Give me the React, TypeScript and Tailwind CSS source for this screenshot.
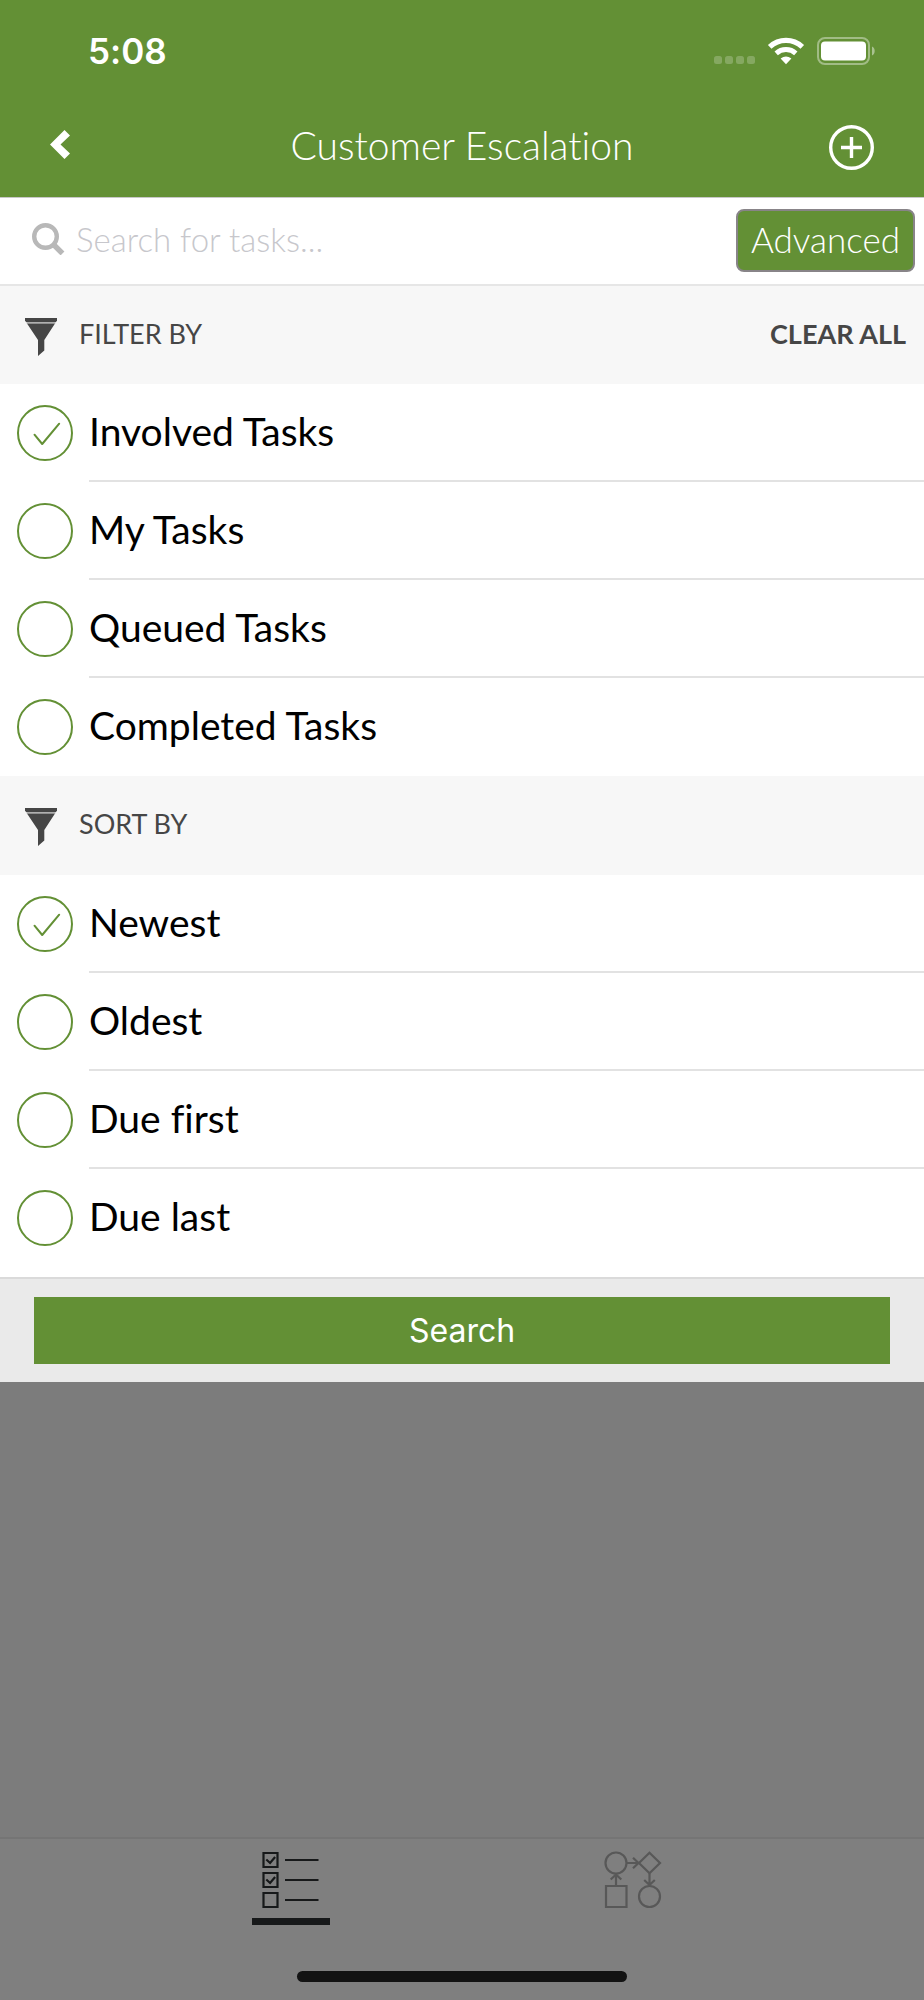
import { useState } from "react";

const filters = ["Involved Tasks", "My Tasks", "Queued Tasks", "Completed Tasks"];
const sorts = ["Newest", "Oldest", "Due first", "Due last"];

function StatusBar() {
  return (
    <div className="flex h-[101px] items-center justify-between pr-[47px] pl-[88px]">
      <span className="font-[Inter,sans-serif] text-[35px] leading-[44px] font-semibold">
        5:08
      </span>

      <div className="flex items-center">
        <svg width="41" height="28" viewBox="0 0 41 28" fill="#fff" fillOpacity="0.22">
          <rect x="0" y="19" width="8" height="8" rx="2.5" />
          <rect x="11" y="19" width="8" height="8" rx="2.5" />
          <rect x="22" y="19" width="8" height="8" rx="2.5" />
          <rect x="33" y="19" width="8" height="8" rx="2.5" />
        </svg>

        <svg className="ml-3" width="38" height="28" viewBox="0 0 38 28" fill="none">
          <path d="M2.7 9.8C12 1.2 26 1.2 35.3 9.8" stroke="#fff" strokeWidth="5.2" />
          <path d="M9.2 16.3C14.8 11.3 23.2 11.3 28.8 16.3" stroke="#fff" strokeWidth="5" />
          <path d="M13.6 21.6Q19 17.4 24.4 21.6L19 27.2Z" fill="#fff" />
        </svg>

        <svg className="ml-3" width="60" height="28" viewBox="0 0 60 28" fill="none">
          <rect x="1" y="1" width="51" height="26" rx="7" stroke="#fff" strokeOpacity="0.4" strokeWidth="2" />
          <rect x="4" y="4.5" width="45" height="19" rx="4" fill="#fff" />
          <path d="M55 9.5C58.6 11 58.6 17 55 18.5Z" fill="#fff" fillOpacity="0.45" />
        </svg>
      </div>
    </div>
  );
}

function FunnelIcon() {
  return (
    <svg width="32" height="38" viewBox="0 0 32 38" fill="#464646" className="flex-none">
      <path d="M0 0H32V2.6L31 4H1L0 2.6Z" />
      <path d="M1.500 4H30.500V5.400H1.500Z" fillOpacity="0.4" />
      <path d="M2 5.4H30L19.3 22V32.4L13 38V22Z" />
    </svg>
  );
}

function SectionTitle({ children }: { children: string }) {
  return (
    <div className="flex items-start">
      <FunnelIcon />
      <h2 className="ml-[22px] text-[27px] leading-[32px]">{children}</h2>
    </div>
  );
}

type OptionProps = {
  type: "checkbox" | "radio";
  name: string;
  label: string;
  checked: boolean;
  last: boolean;
  onChange: () => void;
};

function Option({ type, name, label, checked, last, onChange }: OptionProps) {
  return (
    <label className="flex h-[98px] cursor-pointer items-stretch pl-[17px]">
      <span className="mr-4 grid flex-none place-items-center">
        <input
          type={type}
          name={name}
          checked={checked}
          onChange={onChange}
          className="col-start-1 row-start-1 h-14 w-14 appearance-none rounded-full border-2 border-[#639035] outline-none focus-visible:ring-2 focus-visible:ring-[#639035]/40"
        />
        {checked && (
          <svg
            width="56"
            height="56"
            viewBox="0 0 56 56"
            fill="none"
            stroke="#639035"
            strokeWidth="2"
            strokeLinecap="round"
            strokeLinejoin="round"
            className="pointer-events-none col-start-1 row-start-1"
          >
            <path d="M17.5 29.7 25.2 39 42.2 18.7" />
          </svg>
        )}
      </span>

      <span
        className={`flex flex-1 items-center border-b-2 pb-0.5 text-[39px] leading-[46px] text-black ${
          last ? "border-transparent" : "border-[#e2e2e2]"
        }`}
      >
        {label}
      </span>
    </label>
  );
}

export default function App() {
  const [checkedFilters, setCheckedFilters] = useState<string[]>(["Involved Tasks"]);
  const [sort, setSort] = useState("Newest");

  function toggleFilter(label: string) {
    setCheckedFilters((prev) =>
      prev.includes(label) ? prev.filter((f) => f !== label) : [...prev, label],
    );
  }

  return (
    <div className="flex min-h-screen flex-col bg-[#7c7c7c] font-[Lato,sans-serif] [font-variant-ligatures:none]">
      <header className="bg-[#639035] text-white">
        <StatusBar />

        <div className="flex h-24 items-start justify-between px-[50px]">
          <button aria-label="Back" className="flex h-[86px] w-[45px] items-center">
            <svg width="20" height="29" viewBox="0 0 20 29" fill="#fff">
              <path d="M0 14.5 14.5 0 20 5.4 10.5 14.5 20 23.6 14.5 29Z" />
            </svg>
          </button>

          <h1 className="flex h-[88px] items-center text-[39px] leading-[46px] font-light">
            Customer Escalation
          </h1>

          <button aria-label="Add task" className="flex h-[92px] items-center">
            <svg width="45" height="45" viewBox="0 0 45 45" fill="none" stroke="#fff" strokeWidth="3.4">
              <circle cx="22.5" cy="22.5" r="20.8" />
              <path d="M22.5 12V33M12 22.5H33" />
            </svg>
          </button>
        </div>
      </header>

      <main className="bg-white">
        <div className="flex h-[89px] items-center border-t border-b-2 border-t-[#c8c8c8] border-b-[#e6e6e6] pr-[9px] pb-1 pl-8">
          <svg
            width="33"
            height="32"
            viewBox="0 0 33 32"
            fill="none"
            stroke="#b8b8b8"
            className="flex-none"
          >
            <circle cx="13.5" cy="13.5" r="11.3" strokeWidth="4.4" />
            <path d="M21.5 21.5 30.5 30.5" strokeWidth="5.4" />
          </svg>
          <input
            type="text"
            aria-label="Search for tasks"
            placeholder="Search for tasks..."
            className="ml-[11px] min-w-0 flex-1 text-[33px] leading-[42px] font-light text-black outline-none placeholder:text-[#c7c7cc]"
          />
          <button className="mt-[3px] h-[63px] w-[179px] rounded-lg border-2 border-[#888488] bg-[#639035] pb-1 text-[35px] leading-[42px] font-light text-white">
            Advanced
          </button>
        </div>

        <section>
          <div className="flex h-[98px] items-start justify-between bg-[#f7f7f7] pt-8 pr-[18px] pl-[25px] text-[#464646]">
            <SectionTitle>FILTER BY</SectionTitle>
            <button
              onClick={() => setCheckedFilters([])}
              className="text-[27px] leading-[32px] font-bold"
            >
              CLEAR ALL
            </button>
          </div>
          {filters.map((label, i) => (
            <Option
              key={label}
              type="checkbox"
              name="filter"
              label={label}
              checked={checkedFilters.includes(label)}
              last={i === filters.length - 1}
              onChange={() => toggleFilter(label)}
            />
          ))}
        </section>

        <section className="pb-[10px]">
          <div className="flex h-[99px] items-start bg-[#f7f7f7] pt-8 pl-[25px] text-[#464646]">
            <SectionTitle>SORT BY</SectionTitle>
          </div>
          {sorts.map((label, i) => (
            <Option
              key={label}
              type="radio"
              name="sort"
              label={label}
              checked={sort === label}
              last={i === sorts.length - 1}
              onChange={() => setSort(label)}
            />
          ))}
        </section>

        <div className="border-t-2 border-[#dadada] bg-[#eaeaea] px-[34px] pt-[18px] pb-[18px]">
          <button className="h-[67px] w-full bg-[#639035] font-[Inter,sans-serif] text-[32px] leading-[42px] text-white">
            Search
          </button>
        </div>
      </main>

      <footer className="mt-auto border-t-2 border-[#757575] bg-[#7f7f7f] pb-[18px]">
        <nav className="mx-auto grid w-[74%] grid-cols-2">
          <button aria-label="Tasks" className="flex flex-col items-center pt-3">
            <svg width="58" height="58" viewBox="0 0 58 58" fill="none" stroke="#17191a" strokeWidth="2.2">
              <path d="M1.500 2H15.500V16H1.500ZM1.500 22H15.500V36H1.500ZM1.500 42H15.500V56H1.500Z" />
              <path d="M4.3 8.5 8.1 12 13.1 6M4.3 28.5 8.1 32 13.1 26" />
              <path d="M23 9H56.500M23 29H56.500M23 49H56.500" />
            </svg>
            <span className="mt-[9px] h-[7px] w-[78px] bg-[#17191a]" />
          </button>

          <button aria-label="Processes" className="flex flex-col items-center pt-3">
            <svg width="58" height="58" viewBox="0 0 58 58" fill="none" stroke="#585858" strokeWidth="2.2">
              <circle cx="12" cy="12" r="10.500" />
              <path d="M45.500 1.700 56 12 45.500 22.300 35 12Z" />
              <circle cx="45.500" cy="45.500" r="10.500" />
              <path d="M2 35H22.500V56H2Z" />
              <path d="M22.500 12H34M29 6.700 34.500 12 29 17.300" />
              <path d="M12 35V23.500M6.700 28.500 12 23.500 17.300 28.500" />
              <path d="M45.500 22.500V34M40.200 29 45.500 34 50.800 29" />
            </svg>
          </button>
        </nav>

        <div className="mx-auto mt-[46px] h-[11px] w-[330px] rounded-full bg-[#131313]" />
      </footer>
    </div>
  );
}
